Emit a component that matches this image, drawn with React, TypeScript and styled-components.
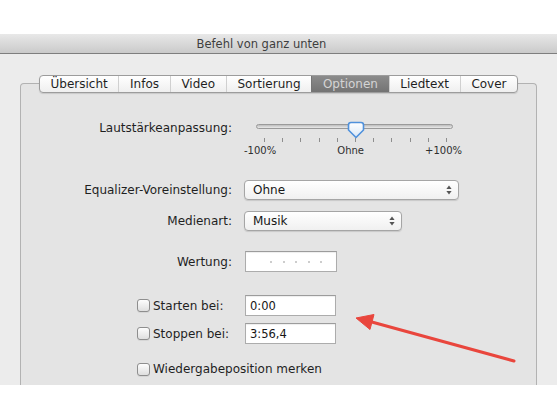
import React from "react";
import styled, { createGlobalStyle, css } from "styled-components";

const GlobalStyle = createGlobalStyle`
  html, body {
    margin: 0;
    padding: 0;
    overflow: hidden;
    background: #ffffff;
  }
  body {
    font-family: "DejaVu Sans", "Lucida Grande", sans-serif;
    font-size: 12px;
    color: #1f1f1f;
  }
`;

const Page = styled.div`
  width: 557px;
  height: 418px;
  padding-top: 34px;
  box-sizing: border-box;
  overflow: hidden;
  background: #ffffff;
`;

const Window = styled.div`
  height: 351px;
  display: flex;
  flex-direction: column;
  background: #ececec;
  overflow: hidden;
`;

const TitleBar = styled.div`
  flex: none;
  height: 19px;
  padding-right: 34px;
  border-bottom: 1px solid #7e7e7e;
  background: linear-gradient(#e8e8e8, #cacaca);
  display: flex;
  align-items: center;
  justify-content: center;
  font-size: 11.5px;
  color: #3e3e3e;
`;

const Body = styled.div`
  flex: 1;
  min-height: 0;
  padding-top: 21px;
  display: flex;
  flex-direction: column;
`;

const TabStrip = styled.div`
  position: relative;
  z-index: 1;
  align-self: center;
  display: flex;
  height: 18px;
  box-sizing: border-box;
  margin-bottom: -10px;
  border: 1px solid #9c9c9c;
  border-radius: 4px;
  background: linear-gradient(#ffffff, #efefef);
  box-shadow: 0 1px 1px rgba(0, 0, 0, 0.12);
  overflow: hidden;
`;

const Tab = styled.div<{ $active?: boolean }>`
  display: flex;
  align-items: center;
  padding: 0 10.7px;
  line-height: 16px;
  border-left: 1px solid #d0d0d0;
  &:first-child {
    border-left: none;
  }
  ${p => p.$active && css`
    background: linear-gradient(#8b8b8b, #737373);
    color: #d4d4d4;
    border-left-color: #767676;
  `}
`;

const Panel = styled.div`
  position: relative;
  flex: 1;
  margin: 0 20px;
  padding-top: 36px;
  border: 1px solid #b2b2b2;
  border-bottom: none;
  border-radius: 4px 4px 0 0;
  background: #e4e4e4;
  display: flex;
  flex-direction: column;
`;

const Row = styled.div<{ $top?: number; $height: number }>`
  display: grid;
  grid-template-columns: 211px 1fr;
  column-gap: 12px;
  margin-top: ${p => p.$top ?? 0}px;
  height: ${p => p.$height}px;
`;

const Label = styled.div<{ $top?: boolean }>`
  text-align: right;
  white-space: nowrap;
  line-height: 16px;
  align-self: ${p => (p.$top ? "start" : "center")};
`;

const Control = styled.div`
  display: flex;
  align-items: center;
`;

const SliderBox = styled.div`
  position: relative;
  width: 220px;
  align-self: start;
  padding-top: 4px;
`;

const Track = styled.div`
  height: 5px;
  margin: 0 11px 0 12px;
  box-sizing: border-box;
  border: 1px solid #9a9a9a;
  border-radius: 3px;
  background: linear-gradient(#bdbdbd, #e9e9e9);
`;

const Ticks = styled.div`
  display: flex;
  justify-content: space-between;
  margin-top: 9px;
  padding: 0 17px 0 20px;
`;

const Tick = styled.span`
  width: 1px;
  height: 4px;
  background: #8e8e8e;
`;

const TickLabels = styled.div`
  display: flex;
  justify-content: space-between;
  margin-top: 2px;
  padding-right: 2px;
  font-size: 10px;
  line-height: 13px;
  color: #2e2e2e;
`;

const Thumb = styled.svg`
  position: absolute;
  left: 103px;
  top: 1px;
`;

const Popup = styled.div<{ $width: number }>`
  width: ${p => p.$width}px;
  height: 20px;
  box-sizing: border-box;
  padding: 0 6px 0 8px;
  border: 1px solid #a5a5a5;
  border-radius: 4px;
  background: linear-gradient(#ffffff, #f0f0f0);
  box-shadow: 0 1px 1px rgba(0, 0, 0, 0.12);
  display: flex;
  align-items: center;
  justify-content: space-between;
  color: #161616;
`;

const Field = styled.div<{ $width: number }>`
  width: ${p => p.$width}px;
  height: 21px;
  box-sizing: border-box;
  margin-left: 1px;
  padding-left: 4px;
  border: 1px solid #acacac;
  border-top-color: #9c9c9c;
  background: #ffffff;
  box-shadow: inset 0 1px 1px rgba(0, 0, 0, 0.07);
  display: flex;
  align-items: center;
  font-size: 11.5px;
  color: #161616;
`;

const Stars = styled.div`
  display: flex;
  gap: 10.5px;
  padding-left: 20px;
`;

const Dot = styled.span`
  width: 2px;
  height: 2px;
  border-radius: 1px;
  background: #bdbdbd;
`;

const CheckLabel = styled.label`
  display: flex;
  align-items: center;
  gap: 3px;
  padding-left: 116px;
  white-space: nowrap;
  line-height: 16px;
  align-self: center;
`;

const Checkbox = styled.span`
  flex: none;
  width: 13px;
  height: 13px;
  box-sizing: border-box;
  border: 1px solid #8e8e8e;
  border-radius: 3px;
  background: linear-gradient(#fdfdfd, #dfdfdf);
  box-shadow: 0 1px 0 rgba(0, 0, 0, 0.06);
`;

const FullRow = styled.div<{ $top: number }>`
  display: flex;
  margin-top: ${p => p.$top}px;
  height: 16px;
`;

const Annotation = styled.svg`
  position: absolute;
  left: 309px;
  top: 216px;
  pointer-events: none;
`;

const tabs = ["Übersicht", "Infos", "Video", "Sortierung", "Optionen", "Liedtext", "Cover"];

const Arrows = () => (
  <svg width="6" height="10" viewBox="0 0 6 10">
    <path d="M3 0.5 L5.6 4 H0.4 Z" fill="#555" />
    <path d="M3 9.5 L5.6 6 H0.4 Z" fill="#555" />
  </svg>
);

const Check = ({ children }: { children: React.ReactNode }) => (
  <CheckLabel>
    <Checkbox />
    {children}
  </CheckLabel>
);

export default function App() {
  return (
    <>
      <GlobalStyle />
      <Page>
        <Window>
          <TitleBar>Befehl von ganz unten</TitleBar>
          <Body>
            <TabStrip>
              {tabs.map(t => (
                <Tab key={t} $active={t === "Optionen"}>{t}</Tab>
              ))}
            </TabStrip>
            <Panel>
              <Row $height={40}>
                <Label $top>Lautstärkeanpassung:</Label>
                <Control>
                  <SliderBox>
                    <Track />
                    <Thumb width="18" height="18" viewBox="0 0 18 18">
                      <defs>
                        <linearGradient id="thumbFill" x1="0" y1="0" x2="0" y2="1">
                          <stop offset="0" stopColor="#ffffff" />
                          <stop offset="1" stopColor="#d9e7f7" />
                        </linearGradient>
                      </defs>
                      <path
                        d="M4 1.5 H14 Q16.5 1.5 16.5 4 V9 L9 16.5 L1.5 9 V4 Q1.5 1.5 4 1.5 Z"
                        fill="url(#thumbFill)"
                        stroke="#4f91dc"
                        strokeWidth="1.6"
                        strokeLinejoin="round"
                      />
                    </Thumb>
                    <Ticks>
                      {Array.from({ length: 11 }).map((_, i) => (
                        <Tick key={i} />
                      ))}
                    </Ticks>
                    <TickLabels>
                      <span>-100%</span>
                      <span>Ohne</span>
                      <span>+100%</span>
                    </TickLabels>
                  </SliderBox>
                </Control>
              </Row>

              <Row $top={20} $height={20}>
                <Label>Equalizer-Voreinstellung:</Label>
                <Control>
                  <Popup $width={215}>
                    Ohne
                    <Arrows />
                  </Popup>
                </Control>
              </Row>

              <Row $top={11} $height={20}>
                <Label>Medienart:</Label>
                <Control>
                  <Popup $width={158}>
                    Musik
                    <Arrows />
                  </Popup>
                </Control>
              </Row>

              <Row $top={20} $height={21}>
                <Label>Wertung:</Label>
                <Control>
                  <Field $width={92}>
                    <Stars>
                      {Array.from({ length: 5 }).map((_, i) => (
                        <Dot key={i} />
                      ))}
                    </Stars>
                  </Field>
                </Control>
              </Row>

              <Row $top={23} $height={21}>
                <Check>Starten bei:</Check>
                <Control>
                  <Field $width={91}>0:00</Field>
                </Control>
              </Row>

              <Row $top={7} $height={21}>
                <Check>Stoppen bei:</Check>
                <Control>
                  <Field $width={91}>3:56,4</Field>
                </Control>
              </Row>

              <FullRow $top={17}>
                <Check>Wiedergabeposition merken</Check>
              </FullRow>

              <Annotation width="200" height="70" viewBox="0 0 200 70">
                <line x1="40" y1="21.5" x2="184" y2="61" stroke="#e9463d" strokeWidth="3" strokeLinecap="round" />
                <path d="M26 18 L40 29.5 L44 14.5 Z" fill="#e9463d" stroke="#e9463d" strokeWidth="1" strokeLinejoin="round" />
              </Annotation>
            </Panel>
          </Body>
        </Window>
      </Page>
    </>
  );
}
